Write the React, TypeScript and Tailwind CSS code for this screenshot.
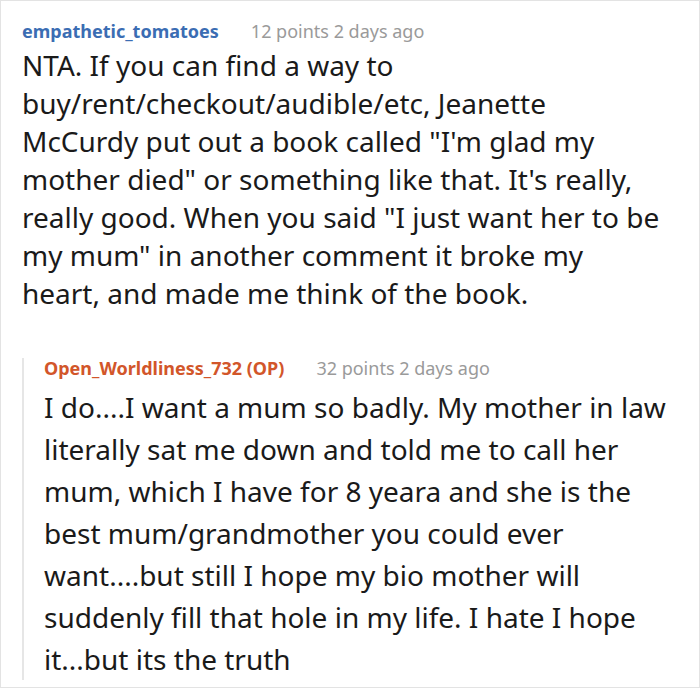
import React from "react";

// Reddit-style comment thread screenshot
const font = { fontFamily: '"Noto Sans", "Open Sans", sans-serif' };

const App: React.FC = () => {
  return (
    <div
      className="box-border h-[688px] w-[700px] overflow-hidden border border-[#e3e3e3] bg-white text-[#1a1a1a]"
      style={font}
    >
      <div className="px-[21px] pt-[15px]">
        <div className="flex items-baseline gap-[32px] text-[18px] leading-[30px]">
          <span className="font-bold text-[#3b6db3]">empathetic_tomatoes</span>
          <span className="text-[#9a9a9a]">12 points 2 days ago</span>
        </div>
        <p className="pr-[14px] text-[28px] leading-[38px]">
          NTA. If you can find a way to buy/rent/checkout/audible/etc, Jeanette
          McCurdy put out a book called "I'm glad my mother died" or something
          like that. It's really, really good. When you said "I just want her to
          be my mum" in another comment it broke my heart, and made me think of
          the book.
        </p>

        <div className="mt-[56px] border-l-2 border-[#e6e6e6] pl-[20px]">
          <div className="-mt-[10px] flex items-baseline gap-[32px] text-[18px] leading-[20px]">
            <span className="font-bold text-[#d2562a]">
              Open_Worldliness_732 (OP)
            </span>
            <span className="text-[#9a9a9a]">32 points 2 days ago</span>
          </div>
          <p className="mt-[8px] -mb-[8px] text-[28px] leading-[42px]">
            I do....I want a mum so badly. My mother in law literally sat me
            down and told me to call her mum, which I have for 8 yeara and she
            is the best mum/grandmother you could ever want....but still I hope
            my bio mother will suddenly fill that hole in my life. I hate I hope
            it...but its the truth
          </p>
        </div>
      </div>
    </div>
  );
};

export default App;
